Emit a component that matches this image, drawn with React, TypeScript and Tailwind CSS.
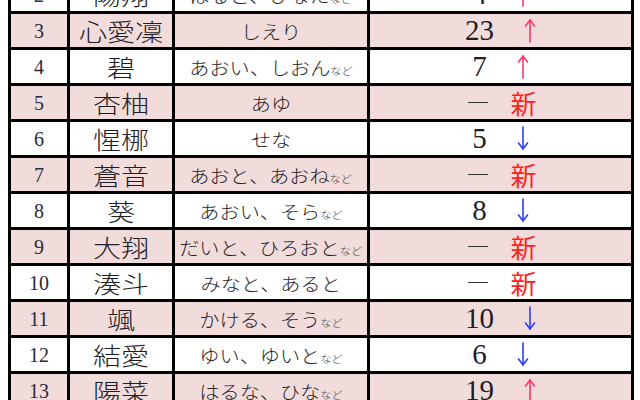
import React from "react";

type Row = {
  rank: number;
  name: string;
  reading: string;
  nado: boolean;
  count: string | null;
  trend: "up" | "down" | "new";
};

const rows: Row[] = [
  { rank: 2, name: "陽翔", reading: "はると、ひなた", nado: true, count: "4", trend: "up" },
  { rank: 3, name: "心愛凜", reading: "しえり", nado: false, count: "23", trend: "up" },
  { rank: 4, name: "碧", reading: "あおい、しおん", nado: true, count: "7", trend: "up" },
  { rank: 5, name: "杏柚", reading: "あゆ", nado: false, count: null, trend: "new" },
  { rank: 6, name: "惺梛", reading: "せな", nado: false, count: "5", trend: "down" },
  { rank: 7, name: "蒼音", reading: "あおと、あおね", nado: true, count: null, trend: "new" },
  { rank: 8, name: "葵", reading: "あおい、そら", nado: true, count: "8", trend: "down" },
  { rank: 9, name: "大翔", reading: "だいと、ひろおと", nado: true, count: null, trend: "new" },
  { rank: 10, name: "湊斗", reading: "みなと、あると", nado: false, count: null, trend: "new" },
  { rank: 11, name: "颯", reading: "かける、そう", nado: true, count: "10", trend: "down" },
  { rank: 12, name: "結愛", reading: "ゆい、ゆいと", nado: true, count: "6", trend: "down" },
  { rank: 13, name: "陽菜", reading: "はるな、ひな", nado: true, count: "19", trend: "up" },
];

function Arrow({ up }: { up: boolean }) {
  const color = up ? "#ff3366" : "#2a3cff";
  return (
    <svg width="12" height="25" viewBox="0 0 12 25" className="shrink-0">
      {up ? (
        <g fill="none" stroke={color} strokeWidth="1.6" strokeLinecap="round">
          <path d="M6 2 L6 24" />
          <path d="M1.5 8 L6 2 L10.5 8" />
        </g>
      ) : (
        <g fill="none" stroke={color} strokeWidth="1.6" strokeLinecap="round">
          <path d="M6 1 L6 23" />
          <path d="M1.5 17 L6 23 L10.5 17" />
        </g>
      )}
    </svg>
  );
}

const jp = "font-['Noto_Sans_CJK_JP',sans-serif]";
const serif = "font-['Liberation_Serif','Noto_Sans_CJK_JP',serif]";

export default function App() {
  return (
    <div className="h-[400px] w-[640px] overflow-hidden bg-white">
      <div className="-mt-[22px] ml-[8px] w-[626px] border-l-[3px] border-black">
        {rows.map((r) => {
          const bg = r.rank % 2 === 1 ? "bg-[#f2dcdb]" : "bg-white";
          return (
            <div key={r.rank} className="flex h-[36px] border-b-[3px] border-black text-[#1e1e28]">
              <div className={`flex w-[59px] items-center justify-center border-r-[3px] border-black ${bg} ${serif} text-[20px] text-[#2a2a38]`}>
                {r.rank}
              </div>
              <div className={`flex w-[105px] items-center justify-center border-r-[3px] border-black ${bg} ${jp} text-[24px] font-light`}>
                <span className="inline-block scale-x-[1.17] leading-none">{r.name}</span>
              </div>
              <div className={`flex w-[195px] items-center justify-center border-r-[3px] border-black ${bg} ${jp} font-light`}>
                <span className="inline-flex scale-x-[1.12] items-baseline leading-none">
                  <span className="text-[18px]">{r.reading}</span>
                  {r.nado && <span className="text-[10px] text-[#444]">など</span>}
                </span>
              </div>
              <div className={`flex w-[264px] items-center justify-center border-r-[3px] border-black ${bg}`}>
                {r.trend === "new" ? (
                  <div className="flex items-center gap-[22px] pl-[4px]">
                    <span className="h-[1.5px] w-[20px] bg-[#333]" />
                    <span className={`${jp} text-[26px] leading-none text-[#ff2222]`}>新</span>
                  </div>
                ) : (
                  <div className="flex items-center gap-[30px]">
                    <span className={`${serif} text-[29px] leading-none`}>{r.count}</span>
                    <Arrow up={r.trend === "up"} />
                  </div>
                )}
              </div>
            </div>
          );
        })}
      </div>
    </div>
  );
}
